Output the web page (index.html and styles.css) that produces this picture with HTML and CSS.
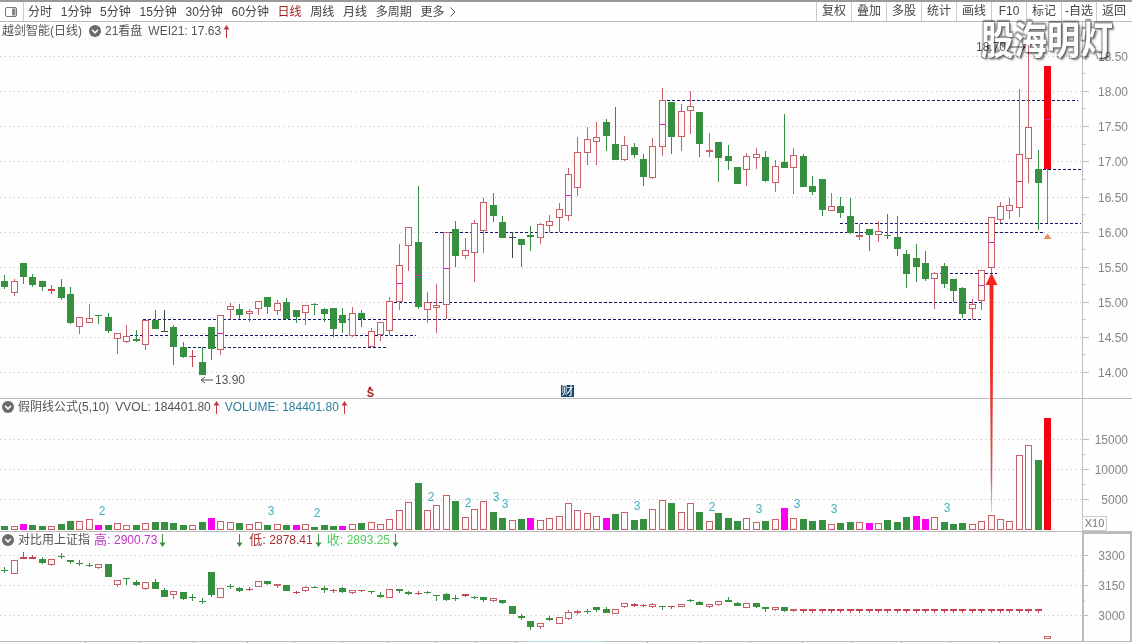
FILE: index.html
```html
<!DOCTYPE html>
<html lang="zh-CN">
<head>
    <meta charset="UTF-8">
    <title>越剑智能(日线)</title>
    <link rel="stylesheet" href="styles.css">
</head>
<body>
    <svg class="sprite" width="0" height="0">
        <symbol id="chevron" viewBox="0 0 12 12">
            <circle cx="6" cy="6" r="6" fill="#6a6a6a"/>
            <polyline points="3,4.8 6,7.8 9,4.8" fill="none" stroke="#fff" stroke-width="1.6"/>
        </symbol>
        <symbol id="arrow-up" viewBox="0 0 7 13">
            <path d="M3.5 0 L6.5 4.5 H4 V13 H3 V4.5 H0.5 Z"/>
        </symbol>
        <symbol id="arrow-down" viewBox="0 0 7 13">
            <path d="M3.5 13 L6.5 8.5 H4 V0 H3 V8.5 H0.5 Z"/>
        </symbol>
    </svg>

    <div class="toolbar">
        <div class="toggle">
            <svg width="12" height="10" viewBox="0 0 12 10">
                <rect x="0.5" y="0.5" width="11" height="9" rx="1.5" fill="#fff" stroke="#777"/>
                <rect x="7" y="1.5" width="3.5" height="7" fill="#888"/>
            </svg>
        </div>
        <nav class="periods">
            <a>分时</a>
            <a>1分钟</a>
            <a>5分钟</a>
            <a>15分钟</a>
            <a>30分钟</a>
            <a>60分钟</a>
            <a class="active">日线</a>
            <a>周线</a>
            <a>月线</a>
            <a>多周期</a>
            <a>更多</a>
            <svg class="more" width="6" height="10" viewBox="0 0 6 10"><polyline points="0.5,0.5 5,5 0.5,9.5" fill="none" stroke="#555"/></svg>
        </nav>
        <div class="actions">
            <a>复权</a>
            <a>叠加</a>
            <a>多股</a>
            <a>统计</a>
            <a>画线</a>
            <a>F10</a>
            <a>标记</a>
            <a>-自选</a>
            <a>返回</a>
        </div>
    </div>

    <div class="charts">
        <section class="pane pane-main">
            <div class="plot">
                <svg id="main-chart" class="chart" viewBox="0 22 1082 376"></svg>
                <div class="pane-head">
                    <span class="title">越剑智能(日线)</span>
                    <svg class="chevron"><use href="#chevron"/></svg>
                    <span>21看盘</span>
                    <span class="item">WEI21: 17.63</span>
                    <svg class="arrow up"><use href="#arrow-up"/></svg>
                </div>
                <span class="badge-s">S</span>
                <span class="badge-cai">财</span>
            </div>
            <svg id="main-axis" class="axis-svg" viewBox="0 22 49 376"></svg>
        </section>

        <section class="pane pane-vol">
            <div class="plot">
                <svg id="vol-chart" class="chart" viewBox="0 399 1082 132"></svg>
                <div class="pane-head head-sub">
                    <svg class="chevron"><use href="#chevron"/></svg>
                    <span>假阴线公式(5,10)</span>
                    <span class="item">VVOL: 184401.80</span>
                    <svg class="arrow up"><use href="#arrow-up"/></svg>
                    <span class="item-wide volume">VOLUME: 184401.80</span>
                    <svg class="arrow up"><use href="#arrow-up"/></svg>
                </div>
            </div>
            <div class="axis-cell">
                <svg id="vol-axis" class="axis-svg" viewBox="0 399 49 132"></svg>
                <span class="scale-box">X10</span>
            </div>
        </section>

        <section class="pane pane-cmp">
            <div class="plot">
                <svg id="cmp-chart" class="chart" viewBox="0 532 1082 109"></svg>
                <div class="pane-head head-cmp">
                    <svg class="chevron"><use href="#chevron"/></svg>
                    <span class="cmp-title">对比用上证指</span>
                    <span class="high"><b>高:</b> 2900.73</span>
                    <svg class="arrow down"><use href="#arrow-down"/></svg>
                    <svg class="arrow down lone"><use href="#arrow-down"/></svg>
                    <span class="low"><b>低:</b> 2878.41</span>
                    <svg class="arrow down"><use href="#arrow-down"/></svg>
                    <span class="close"><b>收:</b> 2893.25</span>
                    <svg class="arrow down"><use href="#arrow-down"/></svg>
                </div>
            </div>
            <div class="axis-box">
                <svg id="cmp-axis" class="axis-svg" viewBox="2 534 46 107"></svg>
            </div>
        </section>

        <svg id="time-axis" class="time-axis" viewBox="0 641 1132 2"></svg>

        <!-- big signal arrow crosses the price and volume panes -->
        <svg class="signal" width="20" height="245" viewBox="981 270 20 245">
            <defs>
                <linearGradient id="fade" x1="0" y1="0" x2="0" y2="1">
                    <stop offset="0" stop-color="#f5231b"/>
                    <stop offset="0.55" stop-color="#e8362c"/>
                    <stop offset="0.85" stop-color="#c9605a"/>
                    <stop offset="1" stop-color="#f0d0cc"/>
                </linearGradient>
            </defs>
            <polygon points="991.5,273 997.5,285 993.5,285 992,512 991,512 989.5,285 985.5,285" fill="url(#fade)"/>
        </svg>

        <div class="watermark">股海明灯</div>
    </div>

    <script src="chart.js"></script>
</body>
</html>
```
FILE: styles.css
```css
* {
    box-sizing: border-box;
}

html, body {
    margin: 0;
    height: 100%;
    overflow: hidden;
}

body {
    width: 1132px;
    height: 643px;
    background-color: #fefefe;
    color: #555;
    font-family: "Liberation Sans", "Noto Sans CJK SC", sans-serif;
    font-size: 12px;
    line-height: 16px;
}

.sprite {
    position: absolute;
}

.toolbar {
    display: flex;
    align-items: stretch;
    height: 22px;
    border-top: 2px solid #999;
    border-bottom: 1px solid #bbb;
    color: #444;
}

.toggle {
    display: flex;
    align-items: center;
    width: 24px;
    padding-left: 5px;
    border-right: 1px solid #ccc;
}

.periods {
    display: flex;
    align-items: center;
    gap: 8.7px;
    padding-left: 4px;
}

.periods .active {
    color: #a52222;
}

.more {
    margin-left: -3px;
}

.actions {
    display: flex;
    margin-left: auto;
    margin-right: 1px;
}

.actions a {
    width: 35px;
    border-left: 1px solid #ccc;
    text-align: center;
    line-height: 19px;
}

.charts {
    position: relative;
}

.pane {
    display: flex;
}

.pane-main {
    height: 377px;
    border-bottom: 1px solid #bbb;
}

.pane-vol {
    height: 133px;
    border-bottom: 1px solid #bbb;
}

.pane-cmp {
    height: 109px;
}

.plot {
    position: relative;
    width: 1082px;
    flex: none;
}

.chart {
    display: block;
    width: 1082px;
    height: 100%;
}

.note {
    fill: #555;
    font-size: 12px;
}

.turnover {
    fill: #43b1c0;
    font-size: 12px;
}

.axis-svg {
    display: block;
    width: 50px;
    height: 100%;
    border-left: 1px solid #bbb;
    font-size: 12px;
    fill: #858585;
}

.axis-cell {
    position: relative;
    width: 50px;
}

.axis-box {
    width: 50px;
    border: 2px solid #bbb;
    border-bottom-width: 0;
}

.axis-box .axis-svg {
    width: 46px;
    border-left: 0;
}

.scale-box {
    position: absolute;
    left: 0;
    bottom: 0;
    width: 25px;
    height: 15px;
    border: 1px solid #ccc;
    color: #777;
    font-size: 11px;
    line-height: 13px;
    text-align: center;
}

.pane-head {
    position: absolute;
    top: 1px;
    left: 2px;
    display: flex;
    align-items: center;
    white-space: nowrap;
}

.head-sub {
    top: 0;
    left: 2px;
}

.head-cmp {
    top: 0;
    left: 2px;
}

.chevron {
    width: 12px;
    height: 12px;
    flex: none;
}

.title + .chevron {
    margin: 0 4px 0 7px;
}

.head-sub .chevron,
.head-cmp .chevron {
    margin-right: 4px;
}

.item {
    margin-left: 6px;
}

.item-wide {
    margin-left: 5px;
}

.volume {
    color: #2c7f9c;
}

.arrow {
    width: 7px;
    height: 13px;
    flex: none;
}

.arrow.up {
    fill: #c0393c;
    margin-left: 2px;
}

.arrow.down {
    fill: #3a8f42;
    margin-left: 2px;
}

.arrow.lone {
    margin-left: 70px;
}

.cmp-title {
    color: #555;
}

.high {
    margin-left: 4px;
    color: #bb35c4;
}

.low {
    margin-left: 6px;
    color: #a83232;
}

.close {
    margin-left: 5px;
    color: #52cc5a;
}

.high b,
.low b,
.close b {
    font-weight: normal;
    font-size: 13px;
}

.badge-s {
    position: absolute;
    left: 366px;
    top: 366px;
    width: 9px;
    height: 10px;
    color: #b02020;
    font-size: 11px;
    font-weight: bold;
    line-height: 10px;
    text-align: center;
}

.badge-s::before {
    content: "";
    position: absolute;
    left: 2px;
    top: -2px;
    border-left: 2.5px solid transparent;
    border-right: 2.5px solid transparent;
    border-bottom: 3px solid #b02020;
}

.badge-cai {
    position: absolute;
    left: 561px;
    top: 363px;
    width: 13px;
    height: 12px;
    background-color: #154a70;
    color: #fff;
    font-size: 12px;
    line-height: 12px;
    text-align: center;
}

.time-axis {
    display: block;
    width: 1132px;
    height: 2px;
}

.signal {
    position: absolute;
    left: 981px;
    top: 248px;
}

/* multiply keeps the note under the watermark readable */
.watermark {
    position: absolute;
    left: 981px;
    top: -3px;
    color: #fff;
    font-family: "Noto Sans CJK SC", sans-serif;
    font-size: 33px;
    font-weight: bold;
    line-height: 36px;
    transform: scaleY(1.18);
    mix-blend-mode: multiply;
    text-shadow: 1px 1px 1px #666, -1px -1px 1px #999, 1px -1px 1px #999, -1px 1px 1px #999, 2px 2px 2px #888;
}
```
FILE: chart.js
```js
const GREEN = '#36903f';
const RED = '#c8606a';
const DARK = '#3a4a42';
const MAGENTA = '#d41fc4';
const NAVY = '#14146e';

// one candle per line of values: type, wick top, body top, body bottom, wick bottom (pixels)
// g green, r hollow red, f filled red, d dark doji, R solid bright red
const mainCandles = `
g 275 281 287 289|r 279 281 293 296|g 263 263 277 284|g 274 277 285 287|g 281 281 287 291|f 285 289 291 294|g 279 287 298 300|g 287 294 323 324
r 317 317 327 334|r 304 318 323 323|g 315 315 316 324|g 313 317 331 333|r 333 333 339 354|r 325 336 342 343|g 330 339 341 342|r 320 320 345 350
g 310 320 329 329|d 310 331 332 332|g 325 327 347 365|g 342 347 357 358|f 350 356 357 367|g 347 362 375 375|g 327 327 349 360|r 315 315 350 355
r 303 306 310 319|g 304 309 315 319|r 309 311 314 322|r 301 301 309 315|g 297 297 307 314|r 300 303 311 315|g 298 302 319 319|g 310 310 317 323
r 305 305 313 325|g 303 304 305 315|g 308 309 314 322|g 308 308 329 337|g 308 315 323 333|r 307 313 336 337|g 310 313 319 327|r 328 331 347 347
r 322 322 335 341|r 297 301 331 335|r 244 265 302 310|r 227 227 246 271|g 186 242 307 309|r 292 302 310 323|r 284 305 308 333|r 232 232 305 319
g 221 229 256 267|r 238 250 256 259|r 220 223 253 282|r 198 202 231 253|g 193 205 216 222|g 216 222 238 238|d 232 237 238 258|g 239 239 245 267
g 226 235 237 251|r 223 224 238 244|r 215 221 226 232|r 203 209 218 232|r 168 174 216 221|r 137 152 188 196|r 127 139 153 165|r 122 137 142 165
g 119 122 136 151|g 107 144 160 160|r 136 145 160 161|g 143 147 155 158|g 154 159 177 186|r 138 146 178 179|r 88 100 147 156|g 102 102 137 154
r 104 111 137 151|r 91 106 111 134|g 112 112 144 157|r 133 150 152 157|g 142 142 158 182|g 145 156 161 170|g 167 167 184 184|r 153 156 170 186
r 148 154 158 169|g 151 157 181 182|r 160 166 183 192|g 114 162 168 168|r 148 155 168 194|g 154 156 187 187|g 176 186 192 195|g 179 179 210 216
r 193 206 211 211|g 197 206 213 218|g 198 216 233 234|r 224 235 237 240|g 229 229 235 251|r 221 231 235 242|g 214 235 236 239|g 216 237 249 256
g 250 254 274 288|g 244 258 267 282|g 251 263 279 281|r 272 273 279 309|g 263 266 284 288|g 279 279 291 302|g 287 288 314 318|r 299 304 309 319
r 270 270 301 310|r 217 217 268 273|r 202 206 220 223|r 198 205 211 219|r 89 154 208 217|r 45 127 159 183|g 150 169 183 230|R 66 66 169 223
`;

const cmpCandles = `
g 567 570 571 573|r 560 560 574 574|f 552 557 559 559|f 555 557 559 559|g 557 559 563 564|r 559 559 565 566|g 553 556 557 559|g 560 560 562 564
g 560 563 563 566|g 563 565 566 567|r 564 564 568 569|g 564 564 577 577|r 580 580 585 587|g 578 578 579 585|g 580 582 585 586|r 582 582 589 590
g 579 582 589 589|g 588 590 597 597|r 591 591 595 599|g 592 592 599 600|g 594 597 598 601|g 598 601 602 604|g 572 572 595 597|r 588 588 598 598
g 584 586 587 589|g 587 588 591 592|f 587 589 590 591|r 581 581 587 587|g 581 581 584 585|r 584 584 586 588|g 585 585 591 591|f 591 592 592 594
r 586 587 591 592|g 586 587 587 588|g 586 588 590 593|f 589 590 591 593|g 587 588 592 593|r 590 590 593 594|f 590 590 591 592|g 591 591 592 594
g 592 595 597 598|r 589 589 598 598|g 589 589 591 593|g 591 592 594 595|f 591 593 594 595|g 591 592 593 594|g 595 595 596 601|g 593 594 600 601
g 595 598 599 601|f 594 594 596 597|g 596 597 598 599|g 597 597 600 602|r 598 598 601 602|g 600 600 603 604|g 606 606 614 614|g 614 616 618 620
g 621 621 627 630|r 623 623 627 629|g 616 618 620 621|r 617 617 624 624|r 610 612 619 620|r 610 611 613 615|g 609 611 612 614|g 607 607 610 612
g 607 609 613 613|r 609 609 614 614|r 603 603 607 608|f 603 604 606 607|f 604 605 606 607|r 603 604 607 608|g 606 606 607 610|f 606 606 607 609
r 604 604 607 607|g 599 600 601 602|g 601 602 605 605|r 604 604 607 608|r 601 601 605 606|g 597 600 602 602|g 602 603 606 606|r 603 603 608 608
g 603 603 607 608|g 607 607 609 612|r 607 607 610 611|g 607 607 611 612|r 609 609 611 612
`;

// volume bar tops, the baseline is y=530. letter m is a magenta bar
const volumes = `
g526 r526 m524 g525 g526 r526 g524 g521 r521 r519 m525 g525 r523 r525 g525 r523 g522 g522 g523 g525
r525 g522 m518 r521 r522 g523 r524 r522 g525 r524 g525 m525 r524 g527 g525 g526 m526 r524 g523 r522
r524 r519 r510 r502 g483 r510 r505 r495 g501 r517 r509 r501 g512 g518 r520 g519 m518 r520 r518 r516
r503 r510 r513 r516 m518 g514 r512 g520 g519 r509 r500 g503 r512 r503 g512 r521 g513 g518 g521 r518
r522 g521 r519 m508 r518 g519 g521 g520 r524 g523 g522 r522 m523 r523 g520 g522 g517 m516 m519 r517
g522 g524 g523 r524 r521 r515 r519 r521 r455 r445 g460 R418
`;

const dojiMarks = [[23, 333], [42, 283], [44, 275], [47, 268], [60, 195], [70, 124], [104, 285], [105, 242], [108, 181], [111, 119]];

// y, from x, to x
const dashLines = [
    [100, 662, 1078], [169, 1038, 1081], [223, 840, 1081], [232, 435, 1045], [273, 940, 997],
    [302, 389, 983], [319, 143, 981], [335, 130, 416], [347, 183, 388]
];

const turnoverLabels = [
    ['2', 102, 511], ['3', 271, 511], ['2', 317, 513], ['2', 431, 497], ['2', 468, 503], ['3', 496, 497], ['3', 505, 504],
    ['3', 637, 506], ['2', 712, 507], ['3', 759, 509], ['3', 797, 504], ['3', 834, 509], ['3', 947, 508]
];

function slotX(i) {
    return Math.round(4.3 + i * 9.394);
}

function parseCandles(text) {
    return text.trim().split(/[|\n]/).map(c => c.split(' ').map((v, n) => n === 0 ? v : Number(v)));
}

function rect(x, y, w, h, fill) {
    return `<rect x="${x}" y="${y}" width="${w}" height="${h}" fill="${fill}"/>`;
}

function hollow(x, top, bottom) {
    const h = Math.max(1, bottom - top - 1);
    return `<rect x="${x - 2.5}" y="${top + 0.5}" width="6" height="${h}" fill="#fffafa" stroke="${RED}"/>`;
}

function gridLines(ys) {
    return ys.map(y => `<line x1="0" x2="1082" y1="${y + 0.5}" y2="${y + 0.5}" stroke="#bdbdbd" stroke-dasharray="1 3.5"/>`).join('');
}

function drawCandle(c, i) {
    const [type, hi, top, bottom, lo] = c;
    const x = slotX(i);
    const colors = { g: GREEN, r: RED, f: '#c84450', d: DARK, R: RED };
    let out = rect(x, hi, 1, lo - hi, colors[type]);
    if (type === 'r') {
        out += hollow(x, top, bottom);
    } else {
        const fill = type === 'R' ? '#f5000f' : colors[type];
        out += rect(x - 3, top, 7, Math.max(1, bottom - top), fill);
    }
    return out;
}

function drawAxis(id, ticks, minors, x) {
    let out = '';
    ticks.forEach(([label, y]) => {
        out += rect(0, y, 6, 1, '#bbb');
        out += `<text x="${x}" y="${y + 5}" text-anchor="end">${label}</text>`;
    });
    minors.forEach(y => {
        out += rect(0, y, 3, 1, '#ccc');
    });
    document.getElementById(id).innerHTML = out;
}

function drawMain() {
    let out = gridLines([56, 91, 126, 161, 197, 232, 267, 302, 337, 372]);
    dashLines.forEach(([y, x1, x2]) => {
        out += `<line x1="${x1}" x2="${x2}" y1="${y + 0.5}" y2="${y + 0.5}" stroke="${NAVY}" stroke-dasharray="3 2"/>`;
    });
    out += parseCandles(mainCandles).map(drawCandle).join('');
    dojiMarks.forEach(([i, y]) => {
        out += rect(slotX(i) - 2, y, 5, 1, MAGENTA);
    });
    // high and low notes
    out += `<path d="M201 380 H213 M201 380 L205 377 M201 380 L205 383" stroke="#555" fill="none"/>`;
    out += `<text x="215" y="384" class="note">13.90</text>`;
    out += `<text x="976" y="51" class="note">18.70</text>`;
    out += `<path d="M1010 47 H1025 L1022 44 M1025 47 L1022 50" stroke="#555" fill="none"/>`;
    out += `<polygon points="1047.5,233.5 1051.5,239 1043.5,239" fill="#e8905a"/>`;
    document.getElementById('main-chart').innerHTML = out;

    const labels = ['18.50', '18.00', '17.50', '17.00', '16.50', '16.00', '15.50', '15.00', '14.50', '14.00'];
    const ys = [56, 91, 126, 161, 197, 232, 267, 302, 337, 372];
    drawAxis('main-axis', labels.map((l, n) => [l, ys[n]]), [73, 108, 144, 179, 214, 249, 284, 319, 354], 45);
}

function drawVolume() {
    const base = 530;
    let out = gridLines([439, 469, 499]);
    volumes.trim().split(/\s+/).forEach((v, i) => {
        const type = v[0];
        const top = Number(v.slice(1));
        const x = slotX(i);
        if (type === 'r') {
            out += hollow(x, top, base);
        } else {
            const fill = { g: GREEN, m: '#fb00f0', R: '#f5000f' }[type];
            out += rect(x - 3, top, 7, base - top, fill);
        }
    });
    turnoverLabels.forEach(([t, x, y]) => {
        out += `<text x="${x}" y="${y + 4}" text-anchor="middle" class="turnover">${t}</text>`;
    });
    document.getElementById('vol-chart').innerHTML = out;
    drawAxis('vol-axis', [['15000', 439], ['10000', 469], ['5000', 499]], [454, 484], 45);
}

function drawCompare() {
    let out = gridLines([555, 585, 615]);
    out += parseCandles(cmpCandles).map(drawCandle).join('');
    // flat days at the end of the series
    for (let i = 85; i <= 110; i++) {
        out += drawCandle(['f', 609, 609, 611, 613], i);
    }
    out += hollow(slotX(111), 636, 639);
    document.getElementById('cmp-chart').innerHTML = out;
    drawAxis('cmp-axis', [['3300', 555], ['3150', 585], ['3000', 615]], [570, 600], 43);
}

function drawTimeAxis() {
    const ticks = [85, 139, 193, 247, 294, 342, 388, 435, 475, 515, 647, 699, 750, 802, 851, 901, 950, 999];
    let out = rect(0, 641, 1132, 1, '#bbb') + rect(526, 641, 78, 1, '#a8dcdc');
    ticks.forEach(x => {
        out += rect(x, 642, 1, 1, '#aaa');
    });
    document.getElementById('time-axis').innerHTML = out;
}

drawMain();
drawVolume();
drawCompare();
drawTimeAxis();
```
